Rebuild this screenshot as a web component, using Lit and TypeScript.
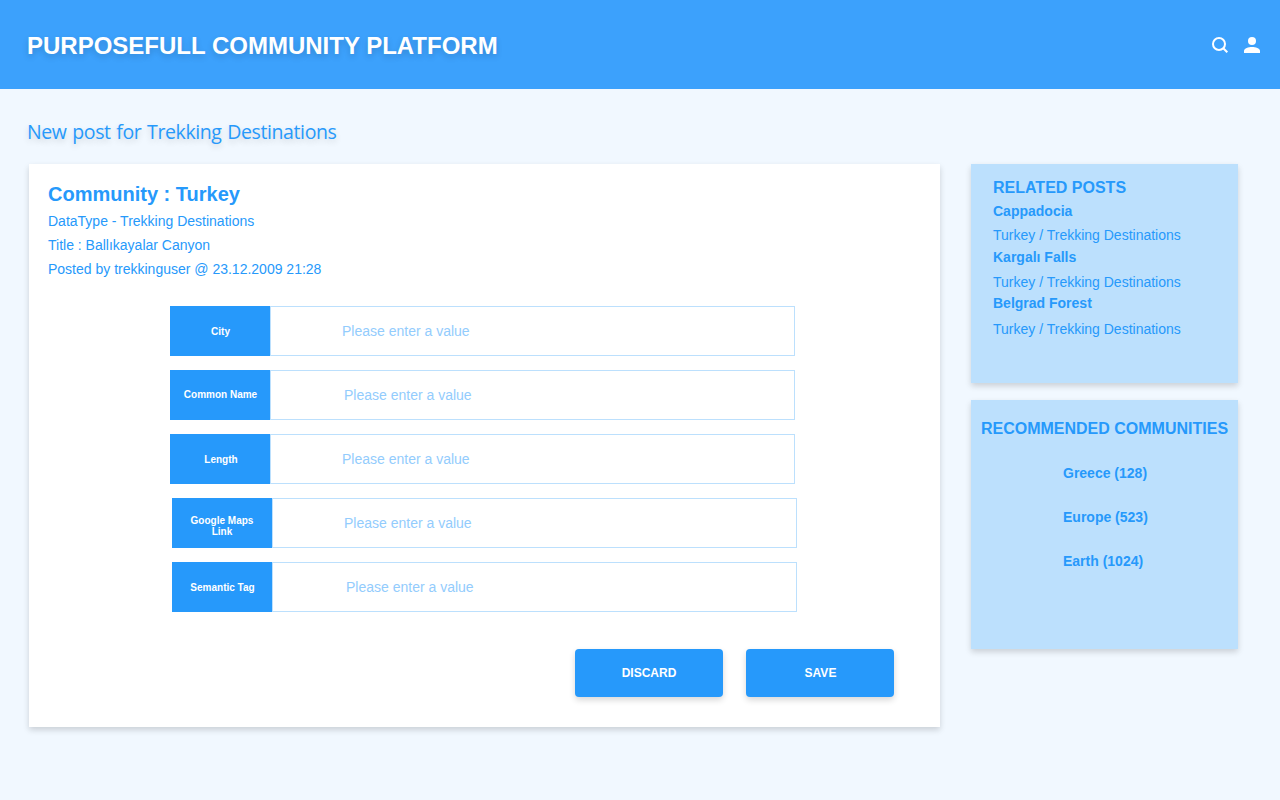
import { LitElement, html, css } from "lit";
import { customElement } from "lit/decorators.js";
import { styleMap } from "lit/directives/style-map.js";

interface Field {
  label: string;
  shift: number;
  labelTop: number;
  labelLeft: number;
  indent: number;
}

const FIELDS: Field[] = [
  { label: "City", shift: 0, labelTop: 20, labelLeft: 13, indent: 71 },
  { label: "Common Name", shift: 0, labelTop: 19, labelLeft: 13, indent: 73 },
  { label: "Length", shift: 0, labelTop: 20, labelLeft: 14, indent: 71 },
  { label: "Google Maps Link", shift: 2, labelTop: 17, labelLeft: 12, indent: 71 },
  { label: "Semantic Tag", shift: 2, labelTop: 20, labelLeft: 13, indent: 73 },
];

const POSTS = [
  { name: "Cappadocia", gap: 8, after: 6 },
  { name: "Kargalı Falls", gap: 9, after: 5 },
  { name: "Belgrad Forest", gap: 10, after: 0 },
];

const COMMUNITIES = ["Greece (128)", "Europe (523)", "Earth (1024)"];

@customElement("app-root")
export class AppRoot extends LitElement {
  static styles = css`
    :host {
      display: block;
      box-sizing: border-box;
      height: 800px;
      background: #f1f8ff;
      color: #2699fb;
      font-family: "Liberation Sans", Arial, sans-serif;
      font-size: 14px;
      overflow: hidden;
    }
    * {
      box-sizing: border-box;
      margin: 0;
    }
    .header {
      height: 89px;
      background: #3ca1fc;
      display: flex;
      align-items: center;
      padding: 0 20px 0 27px;
      color: #fff;
    }
    .brand {
      flex: 1;
      font-size: 24px;
      line-height: 28px;
      font-weight: 700;
      padding-top: 2px;
      text-shadow: 0 3px 6px rgba(0, 0, 0, 0.16);
    }
    .icons {
      display: flex;
      gap: 16px;
    }
    .icon {
      display: block;
      width: 16px;
      height: 16px;
    }
    .subtitle {
      font-family: "Open Sans", "Noto Sans", sans-serif;
      font-weight: 400;
      font-size: 19.5px;
      letter-spacing: -0.39px;
      word-spacing: 1px;
      line-height: 28px;
      padding: 29px 0 0 27px;
      height: 75px;
      text-shadow: 0 3px 6px rgba(0, 0, 0, 0.16);
    }
    .layout {
      display: flex;
      align-items: flex-start;
      gap: 31px;
      padding-left: 29px;
    }
    .card {
      width: 911px;
      height: 563px;
      background: #fff;
      padding: 15px 0 0 19px;
      box-shadow: 0 3px 6px rgba(0, 0, 0, 0.16);
    }
    .community {
      font-size: 20px;
      line-height: 30px;
    }
    .meta {
      line-height: 24px;
    }
    .fields {
      display: grid;
      gap: 14px;
      padding: 25px 0 0 122px;
    }
    .field {
      display: flex;
      width: 625px;
      height: 50px;
    }
    .label {
      width: 100px;
      background: #2699fb;
      color: #fff;
      font-size: 10px;
      line-height: 11px;
      font-weight: 700;
      text-align: center;
      padding-right: 12px;
    }
    .input {
      flex: 1;
      min-width: 0;
      border: 1px solid #bce0fd;
      border-radius: 0;
      background: #fff;
      font: inherit;
      color: #2699fb;
      outline: none;
      padding: 0;
    }
    .input::placeholder {
      color: #93ccfd;
      opacity: 1;
    }
    .actions {
      display: flex;
      justify-content: flex-end;
      gap: 23px;
      padding: 37px 46px 0 0;
    }
    .button {
      width: 148px;
      height: 48px;
      border: 0;
      border-radius: 4px;
      background: #2699fb;
      color: #fff;
      font: 700 12px "Liberation Sans", Arial, sans-serif;
      padding: 0;
      box-shadow: 0 3px 6px rgba(0, 0, 0, 0.16);
    }
    .save {
      padding-left: 1px;
    }
    .side {
      display: grid;
      gap: 17px;
      width: 267px;
    }
    .panel {
      background: #bce0fd;
      box-shadow: 0 3px 6px rgba(0, 0, 0, 0.16);
    }
    .related {
      height: 219px;
      padding: 15px 0 0 22px;
    }
    .recommended {
      height: 249px;
      padding-top: 20px;
    }
    .heading {
      font-size: 16px;
      line-height: 18px;
      white-space: nowrap;
    }
    .related .heading {
      margin-bottom: 6px;
    }
    .recommended .heading {
      text-align: center;
    }
    .post {
      display: grid;
      line-height: 16px;
    }
    .list {
      display: grid;
      gap: 28px;
      padding: 27px 0 0 92px;
      line-height: 16px;
    }
  `;

  render() {
    return html`
      <header class="header">
        <h1 class="brand">PURPOSEFULL COMMUNITY PLATFORM</h1>
        <div class="icons">
          <svg class="icon" viewBox="0 0 16 16" fill="none" stroke="#fff" stroke-width="2">
            <circle cx="7" cy="7" r="6" />
            <path d="M11.3 11.3 15.3 15.3" />
          </svg>
          <svg class="icon" viewBox="0 0 16 16" fill="#fff">
            <circle cx="8" cy="4" r="4" />
            <path d="M0 16v-2c0-2.7 4.5-4 8-4s8 1.3 8 4v2z" />
          </svg>
        </div>
      </header>
      <h2 class="subtitle">New post for Trekking Destinations</h2>
      <div class="layout">
        <main class="card">
          <h3 class="community">Community : Turkey</h3>
          <p class="meta">DataType - Trekking Destinations</p>
          <p class="meta">Title : Ballıkayalar Canyon</p>
          <p class="meta">Posted by trekkinguser @ 23.12.2009 21:28</p>
          <div class="fields">
            ${FIELDS.map(
              (f) => html`<label class="field" style=${styleMap({ marginLeft: `${f.shift}px` })}>
                <span
                  class="label"
                  style=${styleMap({ paddingTop: `${f.labelTop}px`, paddingLeft: `${f.labelLeft}px` })}
                  >${f.label}</span
                >
                <input
                  class="input"
                  placeholder="Please enter a value"
                  style=${styleMap({ paddingLeft: `${f.indent}px` })}
                />
              </label>`
            )}
          </div>
          <div class="actions">
            <button class="button">DISCARD</button>
            <button class="button save">SAVE</button>
          </div>
        </main>
        <aside class="side">
          <section class="panel related">
            <h4 class="heading">RELATED POSTS</h4>
            ${POSTS.map(
              (p) => html`<div
                class="post"
                style=${styleMap({ rowGap: `${p.gap}px`, marginBottom: `${p.after}px` })}
              >
                <b>${p.name}</b>
                <span>Turkey / Trekking Destinations</span>
              </div>`
            )}
          </section>
          <section class="panel recommended">
            <h4 class="heading">RECOMMENDED COMMUNITIES</h4>
            <div class="list">${COMMUNITIES.map((c) => html`<b>${c}</b>`)}</div>
          </section>
        </aside>
      </div>
    `;
  }
}
